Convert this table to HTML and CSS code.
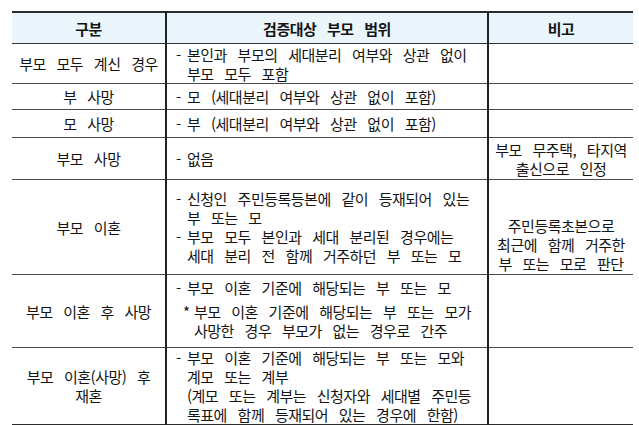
FILE: index.html
```html
<!DOCTYPE html>
<html lang="ko">
<head>
<meta charset="utf-8">
<title>검증대상 부모 범위</title>
<link rel="stylesheet" href="styles.css">
</head>
<body>
<table class="scope-table">
  <colgroup>
    <col class="col-type">
    <col class="col-scope">
    <col class="col-note">
  </colgroup>
  <thead>
    <tr class="row-head">
      <th>구분</th>
      <th>검증대상 부모 범위</th>
      <th>비고</th>
    </tr>
  </thead>
  <tbody>
    <tr class="row-1">
      <td class="type">부모 모두 계신 경우</td>
      <td class="scope">
        <p class="item"><span class="mark">-</span>본인과 부모의 세대분리 여부와 상관 없이<br>부모 모두 포함</p>
      </td>
      <td class="note"></td>
    </tr>
    <tr class="row-2">
      <td class="type">부 사망</td>
      <td class="scope">
        <p class="item"><span class="mark">-</span>모 (세대분리 여부와 상관 없이 포함)</p>
      </td>
      <td class="note"></td>
    </tr>
    <tr class="row-3">
      <td class="type">모 사망</td>
      <td class="scope">
        <p class="item"><span class="mark">-</span>부 (세대분리 여부와 상관 없이 포함)</p>
      </td>
      <td class="note"></td>
    </tr>
    <tr class="row-4">
      <td class="type">부모 사망</td>
      <td class="scope">
        <p class="item"><span class="mark">-</span>없음</p>
      </td>
      <td class="note">부모 무주택, 타지역<br>출신으로 인정</td>
    </tr>
    <tr class="row-5">
      <td class="type">부모 이혼</td>
      <td class="scope">
        <p class="item"><span class="mark">-</span>신청인 주민등록등본에 같이 등재되어 있는<br>부 또는 모</p>
        <p class="item"><span class="mark">-</span>부모 모두 본인과 세대 분리된 경우에는<br>세대 분리 전 함께 거주하던 부 또는 모</p>
      </td>
      <td class="note note-low">주민등록초본으로<br>최근에 함께 거주한<br>부 또는 모로 판단</td>
    </tr>
    <tr class="row-6">
      <td class="type">부모 이혼 후 사망</td>
      <td class="scope scope-top">
        <p class="item"><span class="mark">-</span>부모 이혼 기준에 해당되는 부 또는 모</p>
        <p class="item item-star"><span class="mark">*</span>부모 이혼 기준에 해당되는 부 또는 모가<br>사망한 경우 부모가 없는 경우로 간주</p>
      </td>
      <td class="note"></td>
    </tr>
    <tr class="row-7">
      <td class="type">부모 이혼(사망) 후<br>재혼</td>
      <td class="scope">
        <p class="item"><span class="mark">-</span>부모 이혼 기준에 해당되는 부 또는 모와<br>계모 또는 계부<br>(계모 또는 계부는 신청자와 세대별 주민등<br>록표에 함께 등재되어 있는 경우에 한함)</p>
      </td>
      <td class="note"></td>
    </tr>
  </tbody>
</table>
</body>
</html>
```

FILE: styles.css
```css
html, body {
  margin: 0;
  padding: 0;
  background: #ffffff;
}

body {
  padding: 11px 6px 0 12px;
  font-family: "Noto Sans CJK KR", "Noto Sans", "DejaVu Sans", sans-serif;
  font-size: 15px;
  letter-spacing: -0.5px;
  word-spacing: 7px;
  color: #141414;
}

.scope-table {
  width: 621px;
  border-collapse: collapse;
  table-layout: fixed;
  border-top: 2px solid #2b2b2b;
  border-bottom: 2px solid #2b2b2b;
}

.col-type { width: 154px; }
.col-scope { width: 322px; }
.col-note { width: 145px; }

.scope-table th,
.scope-table td {
  padding: 0;
  line-height: 19px;
  vertical-align: middle;
  border-top: 1px solid #4a4a4a;
  white-space: nowrap;
}

.scope-table th + th,
.scope-table td + td {
  border-left: 2px solid #222;
}

.scope-table .row-head th {
  background: #eaf6fc;
  font-weight: bold;
  text-align: center;
  height: 30px;
  border-bottom: 1px solid #333;
}

.scope-table .type {
  text-align: center;
}

.scope-table .note {
  text-align: center;
}

.scope-table .note-low {
  vertical-align: bottom;
  padding-bottom: 1px;
}

.scope-table .scope {
  padding: 0 4px 0 9px;
}

.scope-table .scope-top {
  vertical-align: top;
  padding-top: 3px;
}

.item {
  margin: 0;
  padding-left: 11px;
  text-indent: -11px;
}

.item .mark {
  display: inline-block;
  width: 11px;
  text-indent: 0;
  word-spacing: 0;
}

.item-star {
  margin-top: 5px;
  padding-left: 18px;
}

.row-1 td { height: 39px; }
.row-2 td { height: 25px; }
.row-3 td { height: 27px; }
.row-4 td { height: 41px; }
.row-5 td { height: 93px; }
.row-6 td { height: 69px; }
.row-7 td { height: 76px; }
```
